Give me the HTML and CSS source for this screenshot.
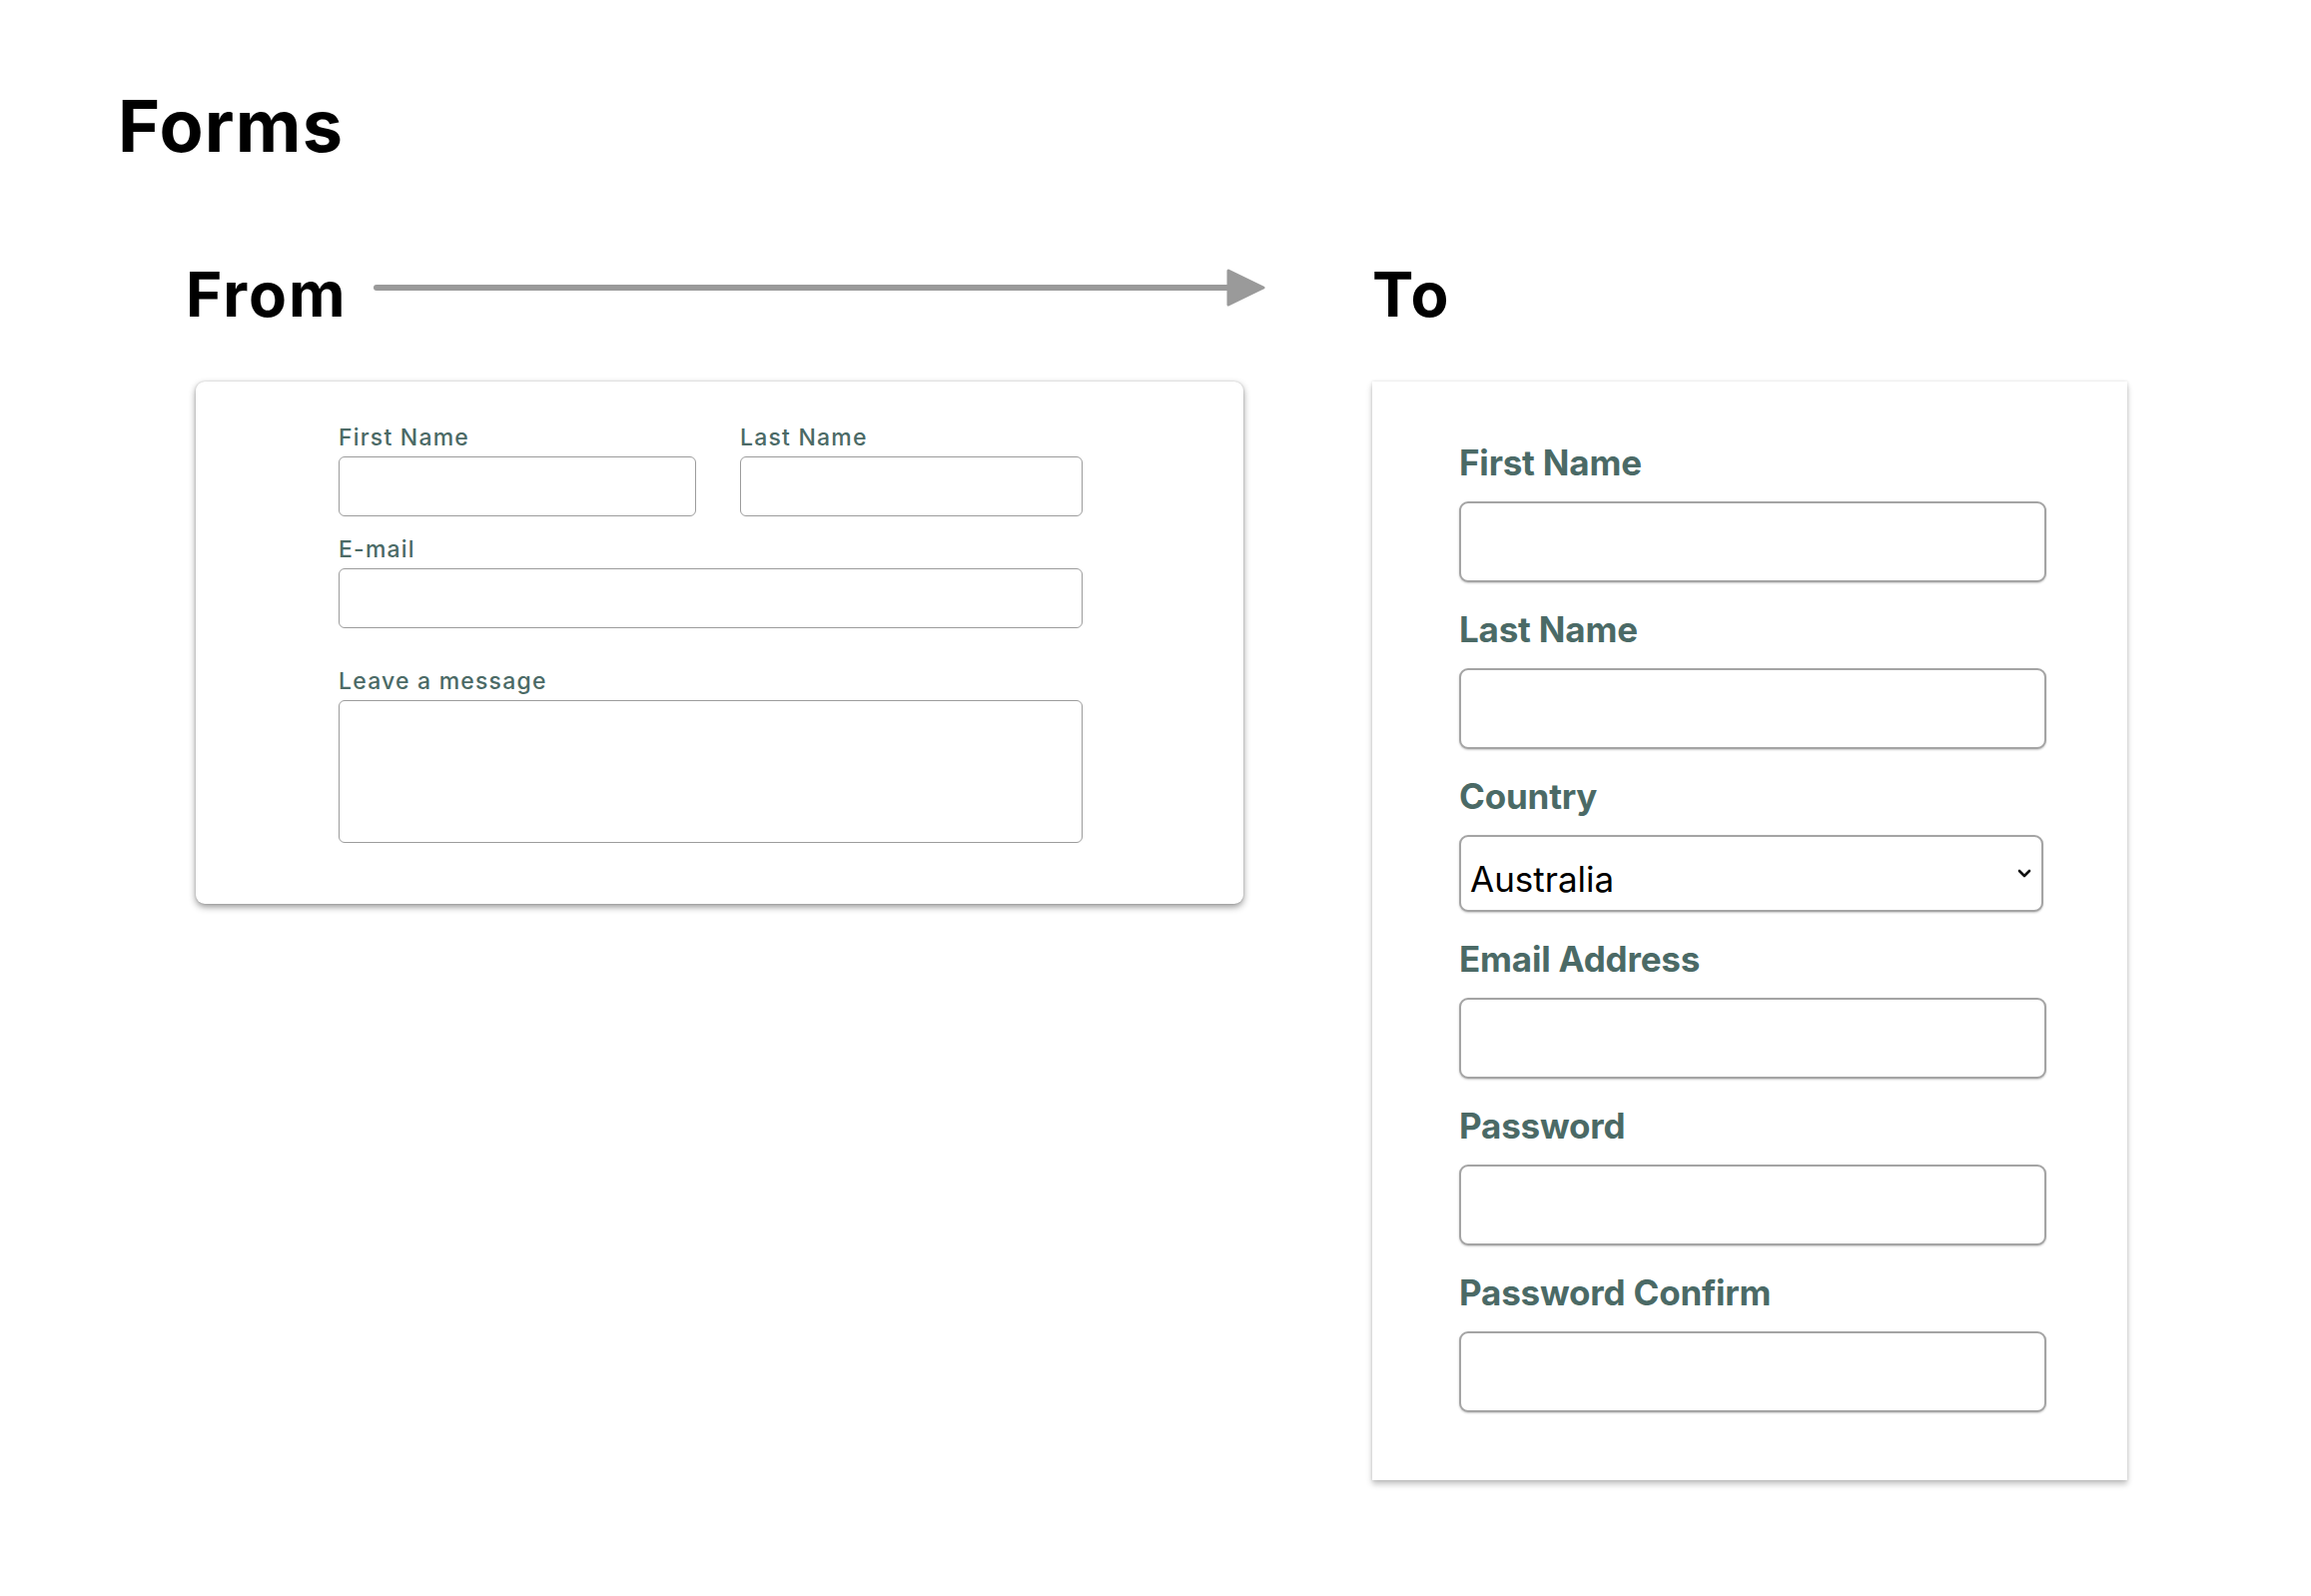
FILE: index.html
```html
<!DOCTYPE html>
<html lang="en">
<head>
<meta charset="utf-8">
<title>Forms</title>
<link rel="stylesheet" href="styles.css">
</head>
<body>
<main class="page">
  <h1 class="title">Forms</h1>
  <div class="compare">
    <div class="col col-from">
      <div class="col-head">
        <h2 class="heading heading-from">From</h2>
        <svg class="arrow" width="893" height="38" viewBox="0 0 893 38" aria-hidden="true">
          <line x1="3" y1="19" x2="858" y2="19" stroke="#9a9a9a" stroke-width="6" stroke-linecap="round"/>
          <polygon points="856,2 891,19 856,36" fill="#9a9a9a" stroke="#9a9a9a" stroke-width="3" stroke-linejoin="round"/>
        </svg>
      </div>
      <form class="card card-old">
        <div class="old-row">
          <div class="old-field old-first">
            <label class="old-label">First Name</label>
            <input class="old-input" type="text">
          </div>
          <div class="old-field old-last">
            <label class="old-label">Last Name</label>
            <input class="old-input" type="text">
          </div>
        </div>
        <div class="old-field old-email">
          <label class="old-label">E-mail</label>
          <input class="old-input" type="email">
        </div>
        <div class="old-field old-message">
          <label class="old-label">Leave a message</label>
          <textarea class="old-input old-textarea"></textarea>
        </div>
      </form>
    </div>
    <div class="col col-to">
      <div class="col-head">
        <h2 class="heading">To</h2>
      </div>
      <form class="card card-new">
        <div class="new-field">
          <label class="new-label">First Name</label>
          <input class="new-input" type="text">
        </div>
        <div class="new-field">
          <label class="new-label">Last Name</label>
          <input class="new-input" type="text">
        </div>
        <div class="new-field">
          <label class="new-label">Country</label>
          <div class="select-wrap">
            <select class="new-select">
              <option>Australia</option>
            </select>
            <svg class="chevron" width="14" height="10" viewBox="0 0 14 10" aria-hidden="true">
              <polyline points="2,2 7,7 12,2" fill="none" stroke="#111" stroke-width="2.6" stroke-linecap="round" stroke-linejoin="round"/>
            </svg>
          </div>
        </div>
        <div class="new-field">
          <label class="new-label">Email Address</label>
          <input class="new-input" type="email">
        </div>
        <div class="new-field">
          <label class="new-label">Password</label>
          <input class="new-input" type="password">
        </div>
        <div class="new-field">
          <label class="new-label">Password Confirm</label>
          <input class="new-input" type="password">
        </div>
      </form>
    </div>
  </div>
</main>
</body>
</html>
```

FILE: styles.css
```css
* {
  box-sizing: border-box;
}

html, body {
  margin: 0;
  background: #ffffff;
}

body {
  font-family: "Inter", "Lato", "Noto Sans", sans-serif;
  color: #000;
  min-height: 1598px;
}

.page {
  padding: 90px 0 110px 118px;
}

.title {
  margin: 0;
  font-size: 72px;
  line-height: 72px;
  font-weight: 700;
  letter-spacing: 1.2px;
}

.compare {
  display: flex;
  gap: 129px;
  margin-top: 102px;
  margin-left: 78px;
  align-items: flex-start;
}

.col-from {
  width: 1049px;
}

.col-to {
  width: 756px;
}

.col-head {
  display: flex;
  align-items: flex-start;
  height: 62px;
  margin-bottom: 56px;
}

.heading {
  margin: 0;
  font-size: 62px;
  line-height: 62px;
  font-weight: 700;
  letter-spacing: 2px;
}

.heading-from {
  margin-left: -10px;
}

.arrow {
  flex: none;
  margin-left: auto;
  margin-right: -22px;
  margin-top: 5px;
}

.card {
  background: #fff;
  margin: 0;
}

/* ---------- old form ---------- */
.card-old {
  height: 523px;
  border-radius: 9px;
  box-shadow: 0 3px 7px rgba(0, 0, 0, 0.42), 0 0 2px rgba(0, 0, 0, 0.2);
  padding: 43px 0 0 143px;
}

.old-row {
  display: flex;
  gap: 44px;
}

.old-first {
  width: 358px;
}

.old-last {
  width: 343px;
}

.old-field {
  display: flex;
  flex-direction: column;
}

.old-email {
  width: 745px;
  margin-top: 20px;
}

.old-message {
  width: 745px;
  margin-top: 40px;
}

.old-label {
  font-size: 23px;
  line-height: 26px;
  font-weight: 500;
  color: #4b6a66;
  margin-bottom: 6px;
  letter-spacing: 1.2px;
}

.old-input {
  display: block;
  width: 100%;
  height: 60px;
  border: 1.5px solid #9c9c9c;
  border-radius: 6px;
  background: #fff;
  font: inherit;
  padding: 0 10px;
  outline: none;
}

.old-textarea {
  height: 143px;
  resize: none;
}

/* ---------- new form ---------- */
.card-new {
  box-shadow: 0 4px 6px rgba(0, 0, 0, 0.24), 0 0 3px rgba(0, 0, 0, 0.12);
  padding: 60px 0 68px 87px;
  display: flex;
  flex-direction: column;
  gap: 26px;
}

.new-field {
  display: flex;
  flex-direction: column;
}

.new-label {
  font-size: 35px;
  line-height: 42px;
  font-weight: 700;
  color: #4b6a66;
  margin-bottom: 18px;
  letter-spacing: -0.2px;
}

.new-input {
  display: block;
  width: 588px;
  height: 81px;
  border: 2px solid #a4a4a4;
  border-radius: 9px;
  background: #fff;
  box-shadow: 0 1px 2px rgba(0, 0, 0, 0.22);
  outline: none;
  font: inherit;
  padding: 0 12px;
}

.select-wrap {
  position: relative;
  width: 585px;
}

.new-select {
  display: block;
  width: 585px;
  height: 77px;
  -webkit-appearance: none;
  appearance: none;
  border: 2px solid #a4a4a4;
  border-radius: 9px;
  background: #fff;
  box-shadow: 0 1px 2px rgba(0, 0, 0, 0.22);
  font-family: "Inter", "Lato", sans-serif;
  font-size: 35px;
  font-weight: 400;
  color: #000;
  padding: 11px 40px 0 9px;
  outline: none;
}

.chevron {
  position: absolute;
  right: 12px;
  top: 34px;
}
```
